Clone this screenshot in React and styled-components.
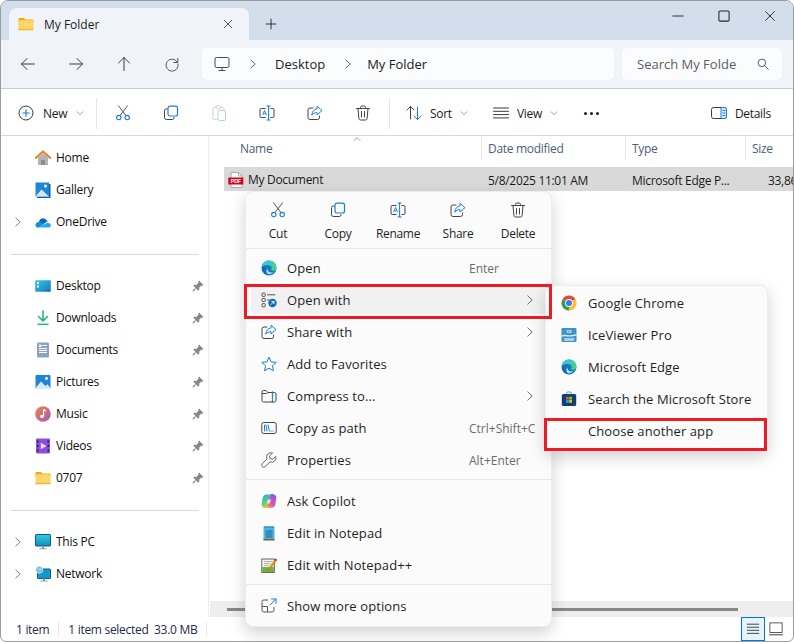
import React from 'react'
import styled, { createGlobalStyle } from 'styled-components'

const GlobalStyle = createGlobalStyle`
  html, body { margin: 0; padding: 0; background: #fff; }
  body { font-family: "Open Sans", "Noto Sans", sans-serif; font-size: 12px; color: #1b1b1b; }
  * { box-sizing: border-box; }
`

const Glyph = styled.svg`
  display: block;
  flex: none;
`

const Svg = ({ size = 16, children }) => (
  <Glyph width={size} height={size} viewBox="0 0 16 16" fill="none">{children}</Glyph>
)

const Line = ({ d, c = '#3b3b3b', w = 1 }) => (
  <path d={d} stroke={c} strokeWidth={w} strokeLinecap="round" strokeLinejoin="round" fill="none" />
)

const BLUE = '#1a7fd4'

// line icons
const Back = () => <Svg size={16}><Line d="M14.5 8H1.5M7 2.5 1.5 8 7 13.5" /></Svg>
const Forward = () => <Svg size={16}><Line d="M1.5 8h13M9 2.5 14.5 8 9 13.5" /></Svg>
const Up = () => <Svg size={16}><Line d="M8 14.5v-13M2.5 7 8 1.5 13.5 7" /></Svg>
const Refresh = () => <Svg size={16}><Line d="M13.5 6.5A6 6 0 1 0 14 8M13.8 2.5v4h-4" c="#555" /></Svg>
const Close = ({ size = 12 }) => <Svg size={size}><Line d="M2 2l12 12M14 2 2 14" c="#222" w={1.2} /></Svg>
const Plus = () => <Svg size={12}><Line d="M8 1.5v13M1.5 8h13" c="#222" w={1.2} /></Svg>
const Minimize = () => <Svg size={12}><Line d="M1 8h14" c="#222" w={1.2} /></Svg>
const Maximize = () => <Svg size={12}><rect x="1.2" y="1.2" width="13.6" height="13.6" rx="1.6" stroke="#222" strokeWidth="1.4" /></Svg>
const ChevronRight = ({ c = '#555' }) => <Svg size={10}><Line d="M4.5 1.5 11.500 8l-7 6.500" c={c} w={1.5} /></Svg>
const ChevronDown = () => <Svg size={8}><Line d="M2 5.5 8 11l6-5.5" c="#8a8a8a" w={1.6} /></Svg>
const Computer = () => (
  <Svg size={16}>
    <rect x="1" y="1.5" width="14" height="10" rx="1.6" stroke="#4a4a4a" />
    <Line d="M5 14.5h6M8 11.5v3" c="#4a4a4a" />
  </Svg>
)
const SearchGlass = () => <Svg size={12}><circle cx="6.5" cy="6.5" r="5" stroke="#4a4a4a" strokeWidth="1.2" /><Line d="M10.2 10.2 15 15" c="#4a4a4a" w={1.2} /></Svg>
const NewIcon = () => <Svg size={16}><circle cx="8" cy="8" r="7" stroke="#3b3b3b" /><Line d="M8 4.8v6.4M4.8 8h6.4" c={BLUE} w={1.2} /></Svg>
const Cut = () => (
  <Svg size={16}>
    <Line d="M3.5 .8 10.7 10.2M12.5 .8 5.3 10.2" c="#555" />
    <circle cx="3.8" cy="12.6" r="2.2" stroke={BLUE} strokeWidth="1.1" />
    <circle cx="12.2" cy="12.6" r="2.2" stroke={BLUE} strokeWidth="1.1" />
  </Svg>
)
const Copy = () => (
  <Svg size={16}>
    <path d="M4.2 4H3A1.6 1.6 0 0 0 1.5 5.6v7A1.9 1.9 0 0 0 3.4 14.5h6A1.6 1.6 0 0 0 11 13v-.5" stroke="#444" strokeLinecap="round" />
    <rect x="5" y="1.2" width="9.5" height="9.8" rx="2" stroke={BLUE} strokeWidth="1.2" />
  </Svg>
)
const Paste = () => (
  <Svg size={16}>
    <path d="M5 2.5H3.4A1.4 1.4 0 0 0 2 3.9v9.2a1.4 1.4 0 0 0 1.4 1.4H6" stroke="#cfcfcf" />
    <rect x="5" y=".8" width="5" height="3" rx="1" stroke="#cfcfcf" />
    <path d="M10 2.5h1.6A1.4 1.4 0 0 1 13 3.9V5" stroke="#cfcfcf" />
    <rect x="7" y="5.5" width="7.5" height="10" rx="1.5" stroke="#a9d3f2" />
  </Svg>
)
const Rename = () => (
  <Svg size={16}>
    <path d="M6.5 3.5H2.2A1.2 1.2 0 0 0 1 4.7v6.6a1.2 1.2 0 0 0 1.2 1.2h4.3M11.5 3.5h2.3A1.2 1.2 0 0 1 15 4.7v6.6a1.2 1.2 0 0 1-1.2 1.2h-2.3" stroke="#444" />
    <path d="M3.6 10.2 5.6 5.4l2 4.8M4.3 8.7h2.6" stroke="#1a7fd4" strokeWidth=".9" />
    <Line d="M9.6 1.2v13.6M8 1h3.2M8 15h3.2" c={BLUE} w={1.1} />
  </Svg>
)
const Share = () => (
  <Svg size={16}>
    <path d="M6 3H3a2 2 0 0 0-2 2v7.5a2 2 0 0 0 2 2h7.5a2 2 0 0 0 2-2V11" stroke="#444" strokeLinecap="round" />
    <path d="M10 1.3 15 5.6l-5 4.3V7.6c-2.3 0-4 .8-5.2 2.6C5 6.6 7 4.3 10 3.9z" stroke={BLUE} strokeLinejoin="round" />
  </Svg>
)
const Trash = () => (
  <Svg size={16}>
    <Line d="M1.5 3.5h13M5.5 3.5V2.6A1.6 1.6 0 0 1 7 1h2a1.6 1.6 0 0 1 1.5 1.6v.9M3 3.5l.9 10a1.6 1.6 0 0 0 1.6 1.5h5a1.6 1.6 0 0 0 1.6-1.5l.9-10M6.5 6.5v5.5M9.5 6.5v5.5" c="#444" />
  </Svg>
)
const Sort = () => (
  <Svg size={16}>
    <Line d="M4.5 14V1.5M1 5l3.5-3.5L8 5" c="#444" />
    <Line d="M11.5 2v12.5M8 11l3.5 3.5L15 11" c={BLUE} />
  </Svg>
)
const ViewLines = () => <Svg size={16}><Line d="M.5 3h15M.5 6.3h15M.5 9.6h15M.5 12.9h15" c="#3b3b3b" /></Svg>
const Details = () => (
  <Svg size={16}>
    <rect x=".5" y="2.5" width="15" height="11" rx="2" stroke="#3b3b3b" />
    <path d="M10 2.5h3.5a2 2 0 0 1 2 2v7a2 2 0 0 1-2 2H10z" fill="#d6eaf9" stroke={BLUE} />
    <Line d="M12 5.5h2M12 8h2M12 10.5h2" c={BLUE} />
  </Svg>
)
const OpenWith = () => (
  <Svg size={16}>
    <rect x="1" y="1.2" width="3.2" height="3.2" rx=".6" stroke="#555" />
    <rect x="1" y="6.4" width="3.2" height="3.2" rx=".6" stroke="#555" />
    <rect x="1" y="11.6" width="3.2" height="3.2" rx=".6" stroke="#555" />
    <Line d="M6.5 2.8H14M6.5 8H8" c="#555" />
    <circle cx="11.5" cy="11" r="4.2" fill="#0f6cbd" />
    <Line d="M10 12.5 13 9.5M10.8 9.5H13v2.2" c="#fff" w={.9} />
  </Svg>
)
const Star = () => (
  <Svg size={16}><path d="M8 1.2 10.1 5.9l5.1.5-3.8 3.4 1.1 5L8 12.2l-4.5 2.6 1.1-5L.8 6.4l5.1-.5z" stroke={BLUE} strokeLinejoin="round" /></Svg>
)
const Zip = () => (
  <Svg size={16}>
    <path d="M1 4a1.5 1.5 0 0 1 1.5-1.5H5L7 4.5h6.5A1.5 1.5 0 0 1 15 6v6.5a1.5 1.5 0 0 1-1.5 1.5h-11A1.5 1.5 0 0 1 1 12.5zM1 5.5h4.5L7 4.5" stroke="#444" />
    <Line d="M11.5 4v2M11.5 7.5v1M11.5 10v1M11.5 12.5V14" c={BLUE} w={1.4} />
  </Svg>
)
const CopyPath = () => (
  <Svg size={16}>
    <rect x=".8" y="2.5" width="14.4" height="11" rx="2" stroke="#444" />
    <Line d="M3.5 5v6M5 5l1 6M7 5l1.4 6" c={BLUE} />
    <Line d="M10 11h.2M12 11h.2" c={BLUE} w={1.2} />
  </Svg>
)
const Wrench = () => (
  <Svg size={16}>
    <path d="M14.8 4.4 12 7.2 9 6.6 8.6 3.8 11.6 1A4.4 4.4 0 0 0 6 6.9L1.3 11.700a2 2 0 0 0 2.900 2.900L9 9.900a4.400 4.400 0 0 0 5.800-5.500z" stroke="#666" strokeLinejoin="round" />
  </Svg>
)
const ShowMore = () => (
  <Svg size={16}>
    <path d="M7 2H2.800A1.800 1.800 0 0 0 1 3.800v8.400A1.800 1.800 0 0 0 2.800 14h8.400a1.800 1.800 0 0 0 1.800-1.800V9M1 8.500h5.500V14" stroke="#555" />
    <Line d="M9 7l6-6M10.500 1H15v4.500" c={BLUE} />
  </Svg>
)

// colour icons
const FolderIcon = ({ size = 16 }) => (
  <Svg size={size}>
    <path d="M.5 3a1 1 0 0 1 1-1h4.200L7.500 3.500h7a1 1 0 0 1 1 1V7H.5z" fill="#f0a90e" />
    <rect x=".5" y="4.200" width="15" height="10" rx="1" fill="#fbd76b" />
    <rect x=".5" y="12.800" width="15" height="1.400" fill="#efb93a" />
  </Svg>
)
const EdgeIcon = ({ id }) => (
  <Svg size={16}>
    <defs>
      <linearGradient id={`${id}-a`} x1="0" y1="1" x2="1" y2="0">
        <stop offset="0" stopColor="#0c59a4" />
        <stop offset="1" stopColor="#1b9de2" />
      </linearGradient>
      <linearGradient id={`${id}-b`} x1="0" y1="0" x2="1" y2="1">
        <stop offset="0" stopColor="#35c1f1" />
        <stop offset="1" stopColor="#4fd66a" />
      </linearGradient>
    </defs>
    <circle cx="8" cy="8" r="7.500" fill={`url(#${id}-a)`} />
    <path d="M.6 7C1.300 3.200 4.300.5 8 .5c4.200 0 7.500 3.100 7.500 7 0 2-1.600 3.200-3.300 3.200-1 0-1.900-.3-2.400-.9 1-.7 1.200-1.600.9-2.500C10.100 5.700 8.600 5 7 5 4.400 5 2 5.500.6 7z" fill={`url(#${id}-b)`} />
    <path d="M6.500 8.500c0 2.500 1.800 4 4 4 .6 0 1.200-.1 1.800-.4-1.400 2-3.700 2.600-5.200 2.100C5.200 13.500 4.700 10.500 6.500 8.500z" fill="#9fe0f5" />
  </Svg>
)
const ChromeIcon = () => (
  <Svg size={16}>
    <path d="M8 8 1.500 4.250A7.500 7.500 0 0 1 14.500 4.250z" fill="#e04a3b" />
    <path d="M8 8 14.500 4.250A7.500 7.500 0 0 1 8 15.500z" fill="#fbc02d" />
    <path d="M8 8 8 15.500A7.500 7.500 0 0 1 1.500 4.250z" fill="#2f9e4f" />
    <circle cx="8" cy="8" r="3.900" fill="#fff" />
    <circle cx="8" cy="8" r="3" fill="#3b78e7" />
  </Svg>
)
const IceIcon = () => (
  <Svg size={16}>
    <rect x=".5" y="1" width="15" height="14" rx="1" fill="#3f92c9" />
    <path d="M.5 8.500C4 6 7 10 15.500 7v1.500C8 11 4 8 .5 10z" fill="#d7eefa" />
    <text x="8" y="5.800" textAnchor="middle" fontSize="3" fontFamily="Liberation Sans" fontWeight="700" fill="#fff">ICE</text>
    <text x="8" y="13.500" textAnchor="middle" fontSize="2.600" fontFamily="Liberation Sans" fontWeight="700" fill="#fff">VIEWER</text>
  </Svg>
)
const StoreIcon = () => (
  <Svg size={16}>
    <path d="M5.500 3.500V2.500a1.500 1.500 0 0 1 1.500-1.500h2a1.500 1.500 0 0 1 1.500 1.500v1" stroke="#35a5e8" />
    <rect x=".8" y="3" width="14.400" height="12" rx="1.600" fill="#123f73" />
    <rect x="5" y="5.800" width="2.800" height="2.800" fill="#f1511b" />
    <rect x="8.200" y="5.800" width="2.800" height="2.800" fill="#80cc28" />
    <rect x="5" y="9" width="2.800" height="2.800" fill="#00adef" />
    <rect x="8.200" y="9" width="2.800" height="2.800" fill="#fbbc09" />
  </Svg>
)
const CopilotIcon = () => (
  <Svg size={16}>
    <defs>
      <linearGradient id="cp-a" x1="0" y1="0" x2=".5" y2="1">
        <stop offset="0" stopColor="#2aa8e8" />
        <stop offset=".55" stopColor="#45cf8a" />
        <stop offset="1" stopColor="#f7c82e" />
      </linearGradient>
      <linearGradient id="cp-b" x1=".8" y1="0" x2=".2" y2="1">
        <stop offset="0" stopColor="#7a5cf0" />
        <stop offset=".55" stopColor="#d94fc0" />
        <stop offset="1" stopColor="#f78a3a" />
      </linearGradient>
    </defs>
    <path d="M5.500 1.500H10L6.500 13.500c-.4 1-1.200 1.500-2.300 1.500C2 15 .4 13.400.7 11.200l.9-6C2 3 3.500 1.500 5.500 1.500z" fill="url(#cp-a)" />
    <path d="M10.500 1C13.500 1 15.700 2.700 15.300 5l-1 6.500C14 13.500 12.500 14.800 10.500 14.800H5.800L9 3c.3-1.200.8-2 1.500-2z" fill="url(#cp-b)" />
    <path d="M6.800 6.500h3.300l-1.300 4H5.600z" fill="#f5e8f8" fillOpacity=".85" />
  </Svg>
)
const NotepadIcon = () => (
  <Svg size={16}>
    <rect x="2.500" y="1.500" width="11" height="13.500" fill="#4db5e2" />
    <rect x="2.500" y="14" width="11" height="1.500" fill="#8a5a2c" />
    <path d="M4 1v2M6 1v2M8 1v2M10 1v2M12 1v2" stroke="#2a7fa8" />
    <path d="M4.500 6h7M4.500 8h7M4.500 10h7M4.500 12h7" stroke="#1b6a90" />
  </Svg>
)
const NotepadPlusIcon = () => (
  <Svg size={16}>
    <rect x=".8" y="2" width="12.500" height="13.500" fill="#f3f3e6" stroke="#444" strokeWidth=".8" />
    <rect x="1.200" y="10" width="11.700" height="5" fill="#6fb43f" />
    <path d="M3 4.500h8M3 6.500h6M3 8.500h5" stroke="#9a9a9a" strokeWidth=".7" />
    <path d="M14.500 2 8 10.500l-1.200 2.800 2.600-1.500L15.800 3.200z" fill="#f0a020" stroke="#a85c10" strokeWidth=".5" />
    <path d="M14.500 1.500 15.900 3l-.9.900-1.400-1.400z" fill="#b02020" />
  </Svg>
)
const PdfIcon = () => (
  <Svg size={16}>
    <path d="M3 .5h7.500L14 4v11.500H3z" fill="#fff" stroke="#9a9a9a" strokeWidth=".8" />
    <path d="M10.500.5V4H14" stroke="#9a9a9a" strokeWidth=".8" />
    <rect x=".3" y="5.500" width="15" height="7" fill="#d6001c" />
    <text x="7.800" y="11" textAnchor="middle" fontSize="5.400" fontFamily="Liberation Sans" fontWeight="700" fill="#fff">PDF</text>
  </Svg>
)
const Home = () => (
  <Svg size={16}>
    <path d="M3 7.500 8 3l5 4.500V15H3z" fill="#b4b4b4" />
    <rect x="6" y="10" width="4" height="5" fill="#8e8e8e" />
    <Line d="M.8 8 8 1.300 15.200 8" c="#e8751a" w={1.800} />
  </Svg>
)
const Gallery = () => (
  <Svg size={16}>
    <rect x=".5" y=".5" width="13.500" height="14" fill="#1f86d6" />
    <path d="M14 2h1.500v14H2v-1.500h12z" fill="#0f62a8" />
    <path d="M.5 14.500 6.500 7.500l7.500 7z" fill="#cfe8f8" />
    <circle cx="10.500" cy="4" r="1.500" fill="#fff" />
  </Svg>
)
const OneDrive = () => (
  <Svg size={16}>
    <path d="M4 8a4.200 4.200 0 0 1 8-1.200 3 3 0 0 1 1 .2L7 11z" fill="#0f6cbd" />
    <path d="M1 12.800C-.3 11 .8 8.300 3.500 8c1.200-.1 2.300.2 3.200 1l2 1.500L4 13.500H2.500z" fill="#1490df" />
    <path d="M4 13.500h9.800c2 0 2.800-2.600 1-3.900C13.600 8.700 12.300 8.600 11 9.300z" fill="#28a8ea" />
  </Svg>
)
const DesktopIcon = () => (
  <Svg size={16}>
    <defs>
      <linearGradient id="dk" x1="0" y1="0" x2="1" y2="1">
        <stop offset="0" stopColor="#35c8e0" />
        <stop offset="1" stopColor="#0f78c4" />
      </linearGradient>
    </defs>
    <rect x=".2" y="2.200" width="15.600" height="11.600" rx=".8" fill="url(#dk)" />
    <rect x="2" y="4" width="2" height="2" fill="#fff" />
    <rect x="2" y="7.500" width="2" height="2" fill="#fff" />
    <path d="M11 12.500h4" stroke="#0b4f86" strokeDasharray="1 1" />
  </Svg>
)
const Downloads = () => (
  <Svg size={16}>
    <Line d="M8 1v9.500M3.500 6.500 8 11l4.500-4.500" c="#23b486" w={1.600} />
    <path d="M2.500 14.300h11" stroke="#23b486" strokeWidth="1.400" />
  </Svg>
)
const Documents = () => (
  <Svg size={16}>
    <rect x="2" y=".5" width="12" height="15" rx="1" fill="#8ba3bf" />
    <path d="M7.500 3.500h4.500M4 6.500h8M4 8.500h8M4 10.500h8" stroke="#fff" />
    <rect x="4" y="2.700" width="2.500" height="2.300" fill="#fff" />
  </Svg>
)
const Pictures = () => (
  <Svg size={16}>
    <rect x=".5" y="1" width="15" height="14" rx="1" fill="#1f86d6" />
    <path d="M.5 14 6 7.500l4.500 4.500 2-1.800L15.500 14v1h-15z" fill="#d4ebfa" />
    <circle cx="11.500" cy="4.500" r="1.400" fill="#fff" />
  </Svg>
)
const Music = () => (
  <Svg size={16}>
    <defs>
      <linearGradient id="mu" x1="0" y1="0" x2="1" y2="1">
        <stop offset="0" stopColor="#f0883a" />
        <stop offset="1" stopColor="#a855c8" />
      </linearGradient>
    </defs>
    <circle cx="8" cy="8" r="7.800" fill="url(#mu)" />
    <path d="M8.600 3.500v6.500" stroke="#fff" strokeWidth="1.200" />
    <path d="M8.600 3.500 11 5" stroke="#fff" strokeWidth="1.200" />
    <circle cx="7" cy="10.500" r="1.800" fill="#fff" />
  </Svg>
)
const Videos = () => (
  <Svg size={16}>
    <rect x="1" y=".5" width="14" height="15" rx="1" fill="#8b4fd8" />
    <path d="M2 2.500h1.500v2H2zM2 7h1.500v2H2zM2 11.500h1.500v2H2zM12.500 2.500H14v2h-1.500zM12.500 7H14v2h-1.500zM12.500 11.500H14v2h-1.500z" fill="#2a1560" />
    <path d="M5.800 4.800 11.500 8l-5.700 3.200z" fill="#e9dcff" />
  </Svg>
)
const ThisPc = () => (
  <Svg size={16}>
    <defs>
      <linearGradient id="pc" x1="0" y1="0" x2="0" y2="1">
        <stop offset="0" stopColor="#35cbe0" />
        <stop offset="1" stopColor="#108fc0" />
      </linearGradient>
    </defs>
    <rect x=".5" y=".5" width="15" height="11.500" rx=".6" fill="url(#pc)" stroke="#0f5a86" />
    <path d="M7 12h2v2.200H7zM4.500 14.200h7v1h-7z" fill="#8c9aa6" />
  </Svg>
)
const Network = () => (
  <Svg size={16}>
    <rect x="2.500" y="3" width="13" height="9.500" rx=".6" fill="#149ac8" stroke="#0f5a86" />
    <path d="M8 12.500h2v2H8zM5.500 14.500h7v1h-7z" fill="#8c9aa6" />
    <circle cx="4.300" cy="3.800" r="3.500" fill="#6fb8e8" stroke="#fff" strokeWidth=".6" />
    <path d="M2.500 2.500c1.500 1 2.500 0 3.500.5-.5 1.500-2 1-2.200 2.500" stroke="#e4f2fb" strokeWidth=".7" />
  </Svg>
)
const Pin = () => (
  <Svg size={12}>
    <path d="M9.500.8 15.200 6.500 13.800 7.800 12.600 7.200 9.500 10.300 9.800 13 8.500 14.200 1.800 7.500 3 6.200 5.700 6.500 8.800 3.400 8.200 2.200z" fill="#85898e" />
    <path d="M4.800 11.200 1 15" stroke="#85898e" strokeWidth="1.600" />
  </Svg>
)
const PreviewPane = () => (
  <Svg size={14}>
    <rect x="1" y="1" width="14" height="11" stroke="#444" />
    <path d="M0 14.500h16" stroke="#444" strokeWidth="1.200" />
  </Svg>
)
const ListLines = () => <Svg size={14}><path d="M1 2.500h14M1 6h14M1 9.500h14M1 13h14" stroke="#444" strokeWidth="1.100" /></Svg>
const Caret = () => <Svg size={8}><Line d="M2 11 8 5l6 6" c="#777" w={1.400} /></Svg>

// layout
const Window = styled.div`
  position: relative;
  width: 794px;
  height: 642px;
  display: flex;
  flex-direction: column;
  border: 1px solid #9c9c9c;
  border-radius: 8px 8px 6px 6px;
  overflow: hidden;
  background: #fff;
`

const TitleBar = styled.div`
  height: 39px;
  background: #d3deed;
  display: flex;
  align-items: flex-end;
  padding-left: 8px;
`

const Tab = styled.div`
  width: 240px;
  height: 32px;
  background: #f0f4f9;
  border-radius: 8px 8px 0 0;
  display: flex;
  align-items: center;
  padding: 0 16px 0 9px;
  gap: 10px;
`

const TabTitle = styled.span`
  flex: 1;
  font-size: 12px;
  color: #1b1b1b;
`

const NewTab = styled.div`
  width: 44px;
  height: 32px;
  display: flex;
  align-items: center;
  justify-content: center;
`

const Caption = styled.div`
  margin-left: auto;
  align-self: flex-start;
  display: flex;
  padding-top: 8px;
`

const CaptionButton = styled.div`
  width: 46px;
  height: 14px;
  display: flex;
  align-items: center;
  justify-content: center;
`

const NavBar = styled.div`
  height: 49px;
  background: #f0f4f9;
  border-bottom: 1px solid #c4ccd6;
  display: flex;
  align-items: center;
  padding-left: 3px;
  padding-bottom: 1px;
`

const NavButton = styled.div`
  width: 48px;
  display: flex;
  justify-content: center;
`

const Address = styled.div`
  margin-left: 6px;
  width: 412px;
  height: 32px;
  background: #fbfcfe;
  border-radius: 5px;
  display: flex;
  align-items: center;
  padding-left: 12px;
  font-size: 13px;
`

const Crumb = styled.span`
  margin-left: 18px;
  margin-right: ${p => p.$right}px;
`

const SearchBox = styled.div`
  margin-left: 8px;
  width: 160px;
  height: 32px;
  background: #fbfcfe;
  border-radius: 5px;
  display: flex;
  align-items: center;
  padding-left: 15px;
  font-size: 13px;
  color: #5c5c5c;
`

const SearchText = styled.span`
  width: 100px;
  overflow: hidden;
  white-space: nowrap;
  margin-right: 20px;
`

const Toolbar = styled.div`
  height: 47px;
  border-bottom: 1px solid #d9d9d9;
  display: flex;
  align-items: center;
  padding-top: 2px;
  font-size: 12px;
  letter-spacing: -0.3px;
`

const Labeled = styled.div`
  display: flex;
  align-items: center;
  gap: ${p => p.$gap || 8}px;
  padding-left: ${p => p.$left}px;
  width: ${p => (p.$width ? `${p.$width}px` : 'auto')};
  margin-left: ${p => (p.$push ? 'auto' : '0')};
  padding-right: ${p => p.$right || 0}px;
`

const ToolSep = styled.div`
  width: 1px;
  height: 31px;
  background: #e6e6e6;
  margin: 0 2px;
`

const ToolButton = styled.div`
  width: 48px;
  display: flex;
  justify-content: center;
`

const Dots = styled.div`
  display: flex;
  gap: 3px;
  margin-left: 7px;
`

const Dot = styled.span`
  width: 3px;
  height: 3px;
  border-radius: 50%;
  background: #222;
`

const Body = styled.div`
  flex: 1;
  display: flex;
  min-height: 0;
`

const Sidebar = styled.nav`
  width: 208px;
  border-right: 1px solid #ededed;
  padding-top: 6px;
`

const NavRow = styled.div`
  height: 32px;
  display: grid;
  grid-template-columns: 34px 16px 1fr 12px;
  align-items: center;
  padding-right: 4px;
  font-size: 12px;
  letter-spacing: -0.25px;
  color: #101010;
`

const NavExpand = styled.div`
  display: flex;
  justify-content: center;
`

const NavLabel = styled.span`
  padding: 0 0 2px 5px;
`

const NavDivider = styled.div`
  height: 1px;
  margin: 16px 9px 15px 10px;
  background: #d9d9d9;
`

const Main = styled.main`
  position: relative;
  flex: 1;
  min-width: 0;
  display: flex;
  flex-direction: column;
  overflow: hidden;
`

const Columns = styled.div`
  display: grid;
  grid-template-columns: ${p => p.$first}px 144px 120px 1fr;
  align-items: center;
  height: 24px;
  white-space: nowrap;
  letter-spacing: -0.3px;
`

const HeaderCell = styled.div`
  height: 24px;
  line-height: 26px;
  font-size: 12px;
  color: #4c607a;
  padding-left: ${p => p.$left || 6}px;
  border-left: ${p => (p.$left ? 'none' : '1px solid #e5e5e5')};
`

const SortCaret = styled.div`
  position: absolute;
  left: 144px;
  top: -1px;
`

const FileRow = styled(Columns)`
  margin: 7px 0 0 15px;
  background: #d9d9d9;
  font-size: 12px;
`

const FileName = styled.div`
  display: flex;
  align-items: center;
  gap: 4px;
  padding-left: 4px;
  padding-top: 1px;
`

const FileCell = styled.div`
  padding-left: ${p => p.$left || 7}px;
  padding-top: 2px;
`

const ScrollTrack = styled.div`
  margin-top: auto;
  margin-left: 1px;
  height: 16px;
  background: #eeeeee;
  display: flex;
  align-items: center;
  padding-left: 17px;
`

const ScrollThumb = styled.div`
  width: 511px;
  height: 3px;
  background: #888;
`

const StatusBar = styled.footer`
  height: 24px;
  display: flex;
  align-items: center;
  padding-right: 6px;
  font-size: 12px;
  letter-spacing: -0.3px;
  color: #232a4a;
`

const StatusText = styled.span`
  padding: 0 ${p => p.$right}px 0 ${p => p.$left}px;
  white-space: pre;
`

const StatusSep = styled.div`
  width: 1px;
  height: 14px;
  background: #e6e6e6;
`

const ViewSwitch = styled.div`
  margin-left: auto;
  display: flex;
`

const ViewButton = styled.div`
  width: ${p => (p.$active ? 24 : 22)}px;
  height: 24px;
  display: flex;
  align-items: center;
  justify-content: center;
  background: ${p => (p.$active ? '#e5f3fb' : 'transparent')};
  border: ${p => (p.$active ? '1px solid #0078d4' : 'none')};
`

const MenuLabel = styled.span`
  margin-left: 11px;
  flex: 1;
  white-space: nowrap;
  letter-spacing: 0.1px;
`

const Menu = styled.div`
  position: absolute;
  display: flex;
  flex-direction: column;
  background: #fbfbfb;
  border: 1px solid #ededed;
  border-radius: 8px;
  box-shadow: 0 6px 16px rgba(0, 0, 0, 0.18);
  font-size: 13px;
  color: #1f1f1f;
`

const ContextMenu = styled(Menu)`
  left: 244px;
  top: 190px;
  width: 307px;
  height: 436px;
  ${MenuLabel} { margin-left: 10px; }
`

const SubMenu = styled(Menu)`
  left: 544px;
  top: 284px;
  width: 223px;
  height: 166px;
  padding-top: 1px;
`

const ActionBar = styled.div`
  height: 57px;
  display: flex;
  padding: 10px 2px 0;
  border-bottom: 1px solid #e8e8e8;
  flex: none;
`

const Action = styled.div`
  width: 60px;
  display: flex;
  flex-direction: column;
  align-items: center;
  gap: 7px;
  font-size: 12px;
  letter-spacing: -0.3px;
`

const MenuGroup = styled.div`
  display: flex;
  flex-direction: column;
  padding: ${p => p.$pad};
  border-bottom: ${p => (p.$line ? '1px solid #e8e8e8' : 'none')};
`

const MenuRow = styled.div`
  height: 28px;
  margin: 2px 5px;
  padding: 0 10px;
  display: flex;
  align-items: center;
  border-radius: 4px;
  background: ${p => (p.$hover ? '#f1f1f1' : 'transparent')};
`

const IconSlot = styled.div`
  width: 16px;
  flex: none;
  display: flex;
  justify-content: center;
`

const Shortcut = styled.span`
  font-size: 12px;
  color: #6b6b6b;
  white-space: nowrap;
  width: 67px;
`

const MenuChevron = styled.div`
  margin-right: 1px;
`

const RedFrame = styled.div`
  position: absolute;
  left: ${p => p.$x}px;
  top: ${p => p.$y}px;
  width: ${p => p.$w}px;
  height: ${p => p.$h}px;
  border: 3px solid #ed1c24;
`

const NAV_TOP = [
  ['Home', <Home />],
  ['Gallery', <Gallery />],
  ['OneDrive', <OneDrive />, true],
]
const NAV_PINNED = [
  ['Desktop', <DesktopIcon />],
  ['Downloads', <Downloads />],
  ['Documents', <Documents />],
  ['Pictures', <Pictures />],
  ['Music', <Music />],
  ['Videos', <Videos />],
  ['0707', <FolderIcon />],
]
const NAV_BOTTOM = [
  ['This PC', <ThisPc />, true],
  ['Network', <Network />, true],
]

const SideItem = ({ item, pinned }) => (
  <NavRow>
    <NavExpand>{item[2] && <ChevronRight c="#777" />}</NavExpand>
    {item[1]}
    <NavLabel>{item[0]}</NavLabel>
    {pinned && <Pin />}
  </NavRow>
)

const Item = ({ icon, label, shortcut, more, hover }) => (
  <MenuRow $hover={hover}>
    <IconSlot>{icon}</IconSlot>
    <MenuLabel>{label}</MenuLabel>
    {shortcut && <Shortcut>{shortcut}</Shortcut>}
    {more && <MenuChevron><ChevronRight c="#666" /></MenuChevron>}
  </MenuRow>
)

export default function App() {
  return (
    <>
      <GlobalStyle />
      <Window>
        <TitleBar>
          <Tab>
            <FolderIcon />
            <TabTitle>My Folder</TabTitle>
            <Close size={10} />
          </Tab>
          <NewTab><Plus /></NewTab>
          <Caption>
            <CaptionButton><Minimize /></CaptionButton>
            <CaptionButton><Maximize /></CaptionButton>
            <CaptionButton><Close /></CaptionButton>
          </Caption>
        </TitleBar>

        <NavBar>
          <NavButton><Back /></NavButton>
          <NavButton><Forward /></NavButton>
          <NavButton><Up /></NavButton>
          <NavButton><Refresh /></NavButton>
          <Address>
            <Computer />
            <Crumb $right={17}><ChevronRight /></Crumb>
            Desktop
            <Crumb $right={14}><ChevronRight /></Crumb>
            My Folder
          </Address>
          <SearchBox>
            <SearchText>Search My Folder</SearchText>
            <SearchGlass />
          </SearchBox>
        </NavBar>

        <Toolbar>
          <Labeled $left={17} $width={93} $gap={9}>
            <NewIcon />New<ChevronDown />
          </Labeled>
          <ToolSep />
          <ToolButton><Cut /></ToolButton>
          <ToolButton><Copy /></ToolButton>
          <ToolButton><Paste /></ToolButton>
          <ToolButton><Rename /></ToolButton>
          <ToolButton><Share /></ToolButton>
          <ToolButton><Trash /></ToolButton>
          <ToolSep />
          <Labeled $left={14} $width={101}><Sort />Sort<ChevronDown /></Labeled>
          <Labeled $left={0} $width={84}><ViewLines />View<ChevronDown /></Labeled>
          <Dots><Dot /><Dot /><Dot /></Dots>
          <Labeled $left={0} $push $right={22}><Details />Details</Labeled>
        </Toolbar>

        <Body>
          <Sidebar>
            {NAV_TOP.map(item => <SideItem key={item[0]} item={item} />)}
            <NavDivider />
            {NAV_PINNED.map(item => <SideItem key={item[0]} item={item} pinned />)}
            <NavDivider />
            {NAV_BOTTOM.map(item => <SideItem key={item[0]} item={item} />)}
          </Sidebar>

          <Main>
            <SortCaret><Caret /></SortCaret>
            <Columns $first={272}>
              <HeaderCell $left={31}>Name</HeaderCell>
              <HeaderCell>Date modified</HeaderCell>
              <HeaderCell>Type</HeaderCell>
              <HeaderCell>Size</HeaderCell>
            </Columns>
            <FileRow $first={257}>
              <FileName><PdfIcon />My Document</FileName>
              <FileCell>5/8/2025 11:01 AM</FileCell>
              <FileCell>Microsoft Edge P...</FileCell>
              <FileCell $left={23}>33,861 KB</FileCell>
            </FileRow>
            <ScrollTrack><ScrollThumb /></ScrollTrack>
          </Main>
        </Body>

        <StatusBar>
          <StatusText $left={15} $right={9}>1 item</StatusText>
          <StatusSep />
          <StatusText $left={9} $right={9}>{'1 item selected  33.0 MB'}</StatusText>
          <StatusSep />
          <ViewSwitch>
            <ViewButton $active><ListLines /></ViewButton>
            <ViewButton><PreviewPane /></ViewButton>
          </ViewSwitch>
        </StatusBar>

        <ContextMenu>
          <ActionBar>
            <Action><Cut />Cut</Action>
            <Action><Copy />Copy</Action>
            <Action><Rename />Rename</Action>
            <Action><Share />Share</Action>
            <Action><Trash />Delete</Action>
          </ActionBar>
          <MenuGroup $line $pad="3px 0">
            <Item icon={<EdgeIcon id="e1" />} label="Open" shortcut="Enter" />
            <Item icon={<OpenWith />} label="Open with" more hover />
            <Item icon={<Share />} label="Share with" more />
            <Item icon={<Star />} label="Add to Favorites" />
            <Item icon={<Zip />} label="Compress to..." more />
            <Item icon={<CopyPath />} label="Copy as path" shortcut="Ctrl+Shift+C" />
            <Item icon={<Wrench />} label="Properties" shortcut="Alt+Enter" />
          </MenuGroup>
          <MenuGroup $line $pad="5px 0 3px">
            <Item icon={<CopilotIcon />} label="Ask Copilot" />
            <Item icon={<NotepadIcon />} label="Edit in Notepad" />
            <Item icon={<NotepadPlusIcon />} label="Edit with Notepad++" />
          </MenuGroup>
          <MenuGroup $pad="5px 0 3px">
            <Item icon={<ShowMore />} label="Show more options" />
          </MenuGroup>
        </ContextMenu>

        <SubMenu>
          <Item icon={<ChromeIcon />} label="Google Chrome" />
          <Item icon={<IceIcon />} label="IceViewer Pro" />
          <Item icon={<EdgeIcon id="e2" />} label="Microsoft Edge" />
          <Item icon={<StoreIcon />} label="Search the Microsoft Store" />
          <Item label="Choose another app" />
        </SubMenu>

        <RedFrame $x={243} $y={283} $w={308} $h={35} />
        <RedFrame $x={543} $y={417} $w={223} $h={33} />
      </Window>
    </>
  )
}
